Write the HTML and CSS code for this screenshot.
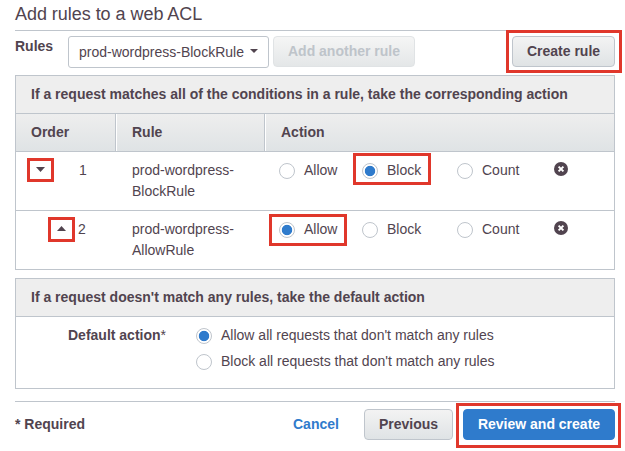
FILE: index.html
```html
<!DOCTYPE html>
<html lang="en">
<head>
<meta charset="utf-8">
<title>Add rules to a web ACL</title>
<link rel="stylesheet" href="styles.css">
</head>
<body>
<main class="page">
  <h1 class="title">Add rules to a web ACL</h1>
  <div class="toolbar">
    <span class="toolbar-label">Rules</span>
    <div class="select"><span>prod-wordpress-BlockRule</span><svg class="caret" width="8" height="4" viewBox="0 0 8 4"><path d="M0 0h8L4 4z"/></svg></div>
    <button class="btn btn-disabled" disabled>Add another rule</button>
    <button class="btn btn-create marked mark-button">Create rule</button>
  </div>

  <section class="panel rules">
    <h2 class="panel-title">If a request matches all of the conditions in a rule, take the corresponding action</h2>
    <div class="row head">
      <div class="cell">Order</div><div class="cell">Rule</div><div class="cell">Action</div>
    </div>
    <div class="row item">
      <div class="order"><span class="move marked mark-move"><svg width="9" height="5" viewBox="0 0 9 5"><path d="M0 0h9L4.5 5z"/></svg></span><span class="number">1</span></div>
      <div class="rule">prod-wordpress-<br>BlockRule</div>
      <div class="actions">
        <label class="option"><i class="radio"></i>Allow</label>
        <label class="option marked mark-option"><i class="radio on"></i>Block</label>
        <label class="option"><i class="radio"></i>Count</label>
        <svg class="remove" width="14" height="14" viewBox="0 0 14 14"><circle cx="7" cy="7" r="7"/><path d="M4.6 4.6l4.8 4.8M9.4 4.6L4.6 9.4"/></svg>
      </div>
    </div>
    <div class="row item">
      <div class="order up"><span class="move marked mark-move"><svg width="9" height="5" viewBox="0 0 9 5"><path d="M0 5h9L4.5 0z"/></svg></span><span class="number">2</span></div>
      <div class="rule">prod-wordpress-<br>AllowRule</div>
      <div class="actions">
        <label class="option marked mark-option low"><i class="radio on"></i>Allow</label>
        <label class="option"><i class="radio"></i>Block</label>
        <label class="option"><i class="radio"></i>Count</label>
        <svg class="remove" width="14" height="14" viewBox="0 0 14 14"><circle cx="7" cy="7" r="7"/><path d="M4.6 4.6l4.8 4.8M9.4 4.6L4.6 9.4"/></svg>
      </div>
    </div>
  </section>

  <section class="panel default">
    <h2 class="panel-title">If a request doesn't match any rules, take the default action</h2>
    <div class="default-body">
      <div class="default-label">Default action<span class="star">*</span></div>
      <div class="default-options">
        <label class="option"><i class="radio on"></i>Allow all requests that don't match any rules</label>
        <label class="option"><i class="radio"></i>Block all requests that don't match any rules</label>
      </div>
    </div>
  </section>

  <footer class="footer">
    <span class="required">* Required</span>
    <a class="cancel">Cancel</a>
    <button class="btn btn-previous">Previous</button>
    <button class="btn btn-primary marked mark-primary">Review and create</button>
  </footer>
</main>
</body>
</html>
```

FILE: styles.css
```css
*, *::before, *::after { box-sizing: border-box; }

body {
  margin: 0;
  background: #fff;
  color: #51444f;
  font: 14px/21px "Liberation Sans", Arial, sans-serif;
}

.page { width: 600px; margin-left: 15px; }

.title {
  height: 31px;
  margin: 0;
  border-bottom: 1px solid #bfc5cc;
  font-size: 18px;
  font-weight: 400;
  letter-spacing: -0.04px;
  line-height: 28px;
}

.toolbar {
  display: flex;
  height: 44px;
  padding-top: 5px;
}

.toolbar-label { width: 53px; font-weight: 700; line-height: 20px; }

.select {
  display: flex;
  align-items: center;
  justify-content: space-between;
  width: 201px;
  height: 32px;
  margin-right: 4px;
  padding: 0 10px 0 10px;
  border: 1px solid #bfc5cc;
  border-radius: 3px;
}

.caret { margin-bottom: 2px; }
.caret, .move svg { fill: #51444f; }

.btn {
  height: 31px;
  padding: 0;
  border: 1px solid #bfc5cc;
  border-radius: 4px;
  background: linear-gradient(#f3f3f3, #dfe3e5);
  color: #51444f;
  font: 700 14px/29px "Liberation Sans", Arial, sans-serif;
}

.btn-disabled { width: 142px; border-color: #e0e3e5; background: linear-gradient(#f5f5f5, #e4e7e8); color: #bec4ca; }
.btn-create { width: 103px; margin-left: auto; }

/* Red call-out frames */
.marked { position: relative; }
.marked::after { content: ""; position: absolute; border: 3px solid #e0372b; }
.mark-button::after { inset: -7px -8px -7px -7px; }
.mark-move::after { left: -9px; top: -9px; width: 27px; height: 24px; }
.up .mark-move::after { height: 25px; }
.mark-option::after { left: -9px; top: -7px; width: 78px; height: 32px; }
.mark-option.low::after { left: -10px; top: -5px; }
.mark-primary::after { inset: -7px -7px -9px -8px; }

.panel { border: 1px solid #bfc5cc; }

.panel-title {
  height: 38px;
  margin: 0;
  padding-left: 15px;
  border-bottom: 1px solid #bfc5cc;
  background: #eee;
  font-size: 14px;
  line-height: 36px;
}

.row { display: grid; grid-template-columns: 100px 149px 1fr; }

.head { height: 38px; border-bottom: 1px solid #bfc5cc; background: linear-gradient(#eee, #dfe3e5); font-weight: 700; line-height: 36px; }
.head .cell { padding-left: 15px; border-right: 1px solid #bfc5cc; }
.head .cell + .cell { border-left: 1px solid #fff; }
.head .cell:last-child { border-right: 0; }

.item { height: 58px; padding-top: 8px; }
.item + .item { height: 59px; border-top: 1px solid #bfc5cc; }

.order { display: flex; padding-left: 20px; }
.order .number { margin-left: 33px; }
.order.up { padding-left: 41px; }
.order.up .number { margin-left: 11px; }
.move { width: 10px; height: 6px; margin-top: 7px; }
.move svg { display: block; }
.rule { padding-left: 16px; }

.actions { display: grid; grid-template-columns: 83px 95px 97px 14px; padding-left: 14px; }
.option { display: flex; height: 21px; align-items: flex-start; white-space: nowrap; }
.actions .option { width: 62px; }

.radio {
  flex: none;
  width: 16px;
  height: 16px;
  margin: 3px 9px 0 0;
  border: 1px solid #bfc5cc;
  border-radius: 50%;
}
.on { background: radial-gradient(circle, #2f7bcc 4.8px, transparent 5.6px); }

.remove { margin-top: 2px; fill: #51444f; stroke: #fff; stroke-width: 2; }
.remove circle { stroke: none; }

.default { height: 111px; margin-top: 8px; }
.default-body { display: flex; padding: 8px 0 0 52px; }
.default-label { width: 128px; font-weight: 700; }
.star { font-weight: 400; }
.default-options { display: grid; gap: 5px; }

.footer {
  display: flex;
  height: 48px;
  margin-top: 12px;
  padding-top: 7px;
  border-top: 1px solid #bfc5cc;
  font-weight: 700;
  line-height: 31px;
}
.required { width: 278px; }
.cancel { color: #2f7bcc; }
.btn-previous { width: 89px; margin-left: auto; }
.btn-primary { width: 152px; margin-left: 10px; border-color: #2f7bcc; background: #2f7bcc; color: #fff; }
```
